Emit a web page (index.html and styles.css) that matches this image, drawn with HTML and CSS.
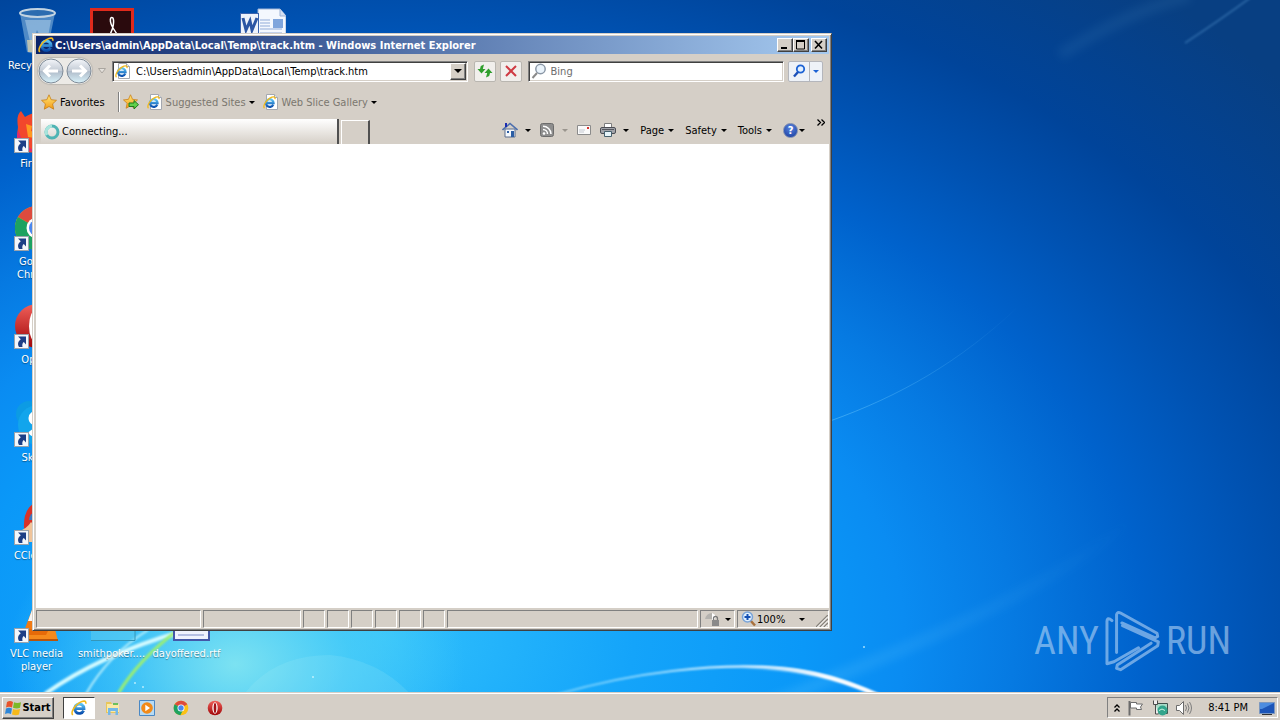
FILE: index.html
```html
<!DOCTYPE html>
<html lang="en">
<head>
  <meta charset="UTF-8">
  <meta name="viewport" content="width=device-width, initial-scale=1.0">
  <title>Desktop</title>
  <link rel="stylesheet" href="styles.css">
</head>
<body>

  <!-- shared icons -->
  <svg class="defs" aria-hidden="true">
    <defs>
      <linearGradient id="gBlue" x1="0" y1="0" x2="0" y2="1">
        <stop offset="0" stop-color="#5cc4f4"/><stop offset="1" stop-color="#0a4fae"/>
      </linearGradient>
      <linearGradient id="gStar" x1="0" y1="0" x2="0" y2="1">
        <stop offset="0" stop-color="#ffe97a"/><stop offset="1" stop-color="#f59a12"/>
      </linearGradient>
      <linearGradient id="gNav" x1="0" y1="0" x2="0" y2="1">
        <stop offset="0" stop-color="#f4f6fa"/><stop offset=".5" stop-color="#c2cad4"/><stop offset=".52" stop-color="#b0bcca"/><stop offset="1" stop-color="#d8f2fa"/>
      </linearGradient>
      <linearGradient id="gRed" x1="0" y1="0" x2="0" y2="1">
        <stop offset="0" stop-color="#f0605a"/><stop offset="1" stop-color="#a00508"/>
      </linearGradient>
    </defs>
    <symbol id="ie" viewBox="0 0 16 16">
      <path d="M12.6 10.6A4.7 4.7 0 1 1 13 8.6H4.5" fill="none" stroke="url(#gBlue)" stroke-width="2.800"/>
      <path d="M1.8 15C-.6 12.600 3.500 5.500 8.500 2.600 12 .6 15.600.2 14.700 3.800" fill="none" stroke="#f2b91c" stroke-width="1.600"/>
    </symbol>
    <symbol id="iepage" viewBox="0 0 16 16">
      <path d="M3.500.5h8l3 3v12h-11z" fill="#fff" stroke="#a4a8b0"/>
      <path d="M11.500.5v3h3" fill="#dfe4ea" stroke="#a4a8b0"/>
      <use href="#ie" x="0" y="2" width="13" height="13"/>
    </symbol>
    <symbol id="star" viewBox="0 0 16 16">
      <path d="M8 .8l2.200 4.900 5.300.6-3.900 3.600 1.100 5.300L8 12.500l-4.700 2.700 1.100-5.300L.5 6.300l5.300-.6z" fill="url(#gStar)" stroke="#c87d14" stroke-width=".8"/>
    </symbol>
    <symbol id="shortcut" viewBox="0 0 15 15">
      <rect x=".5" y=".5" width="14" height="14" fill="#f4f7fb" stroke="#9aa3ad"/>
      <path d="M4 2.500h8v8L9.800 8C8.500 9 8 10.500 8.500 13H5C3 9.500 4.500 7 6.800 5.200z" fill="#1d3f86"/>
    </symbol>
    <symbol id="chrome" viewBox="0 0 48 48">
      <circle cx="24" cy="24" r="22" fill="#fbc116"/>
      <path d="M24 24L4.900 13A22 22 0 0 1 43 13z" fill="#dd4b3e"/>
      <path d="M24 24L4.900 13A22 22 0 0 0 22 46l8-15z" fill="#1da260"/>
      <circle cx="24" cy="24" r="10.500" fill="#fff"/><circle cx="24" cy="24" r="8" fill="#4a87ee"/>
    </symbol>
    <symbol id="opera" viewBox="0 0 48 48">
      <circle cx="24" cy="24" r="22" fill="url(#gRed)"/>
      <ellipse cx="24" cy="24" rx="8" ry="17" fill="#fff"/><ellipse cx="24" cy="24" rx="4" ry="15" fill="#a31115"/>
    </symbol>
  </svg>

  <main class="desktop">
    <svg class="wallpaper" viewBox="0 0 1280 692" preserveAspectRatio="none" aria-hidden="true">
      <defs>
        <linearGradient id="fadeR"><stop offset="0" stop-color="#7cd4ff" stop-opacity=".6"/><stop offset="1" stop-color="#7cd4ff" stop-opacity="0"/></linearGradient>
        <linearGradient id="arc"><stop offset="0" stop-color="#9fe4ff" stop-opacity=".6"/><stop offset=".6" stop-color="#fff"/></linearGradient>
        <linearGradient id="arcEnd"><stop offset="0" stop-color="#fff" stop-opacity="0"/><stop offset=".6" stop-color="#fff"/></linearGradient>
        <filter id="soft"><feGaussianBlur stdDeviation="1"/></filter>
        <filter id="softer" x="-20%" y="-20%" width="140%" height="140%"><feGaussianBlur stdDeviation="5"/></filter>
      </defs>
      <path d="M830 421C900 396 960 362 1020 305" fill="none" stroke="url(#fadeR)" opacity=".7"/>
      <path d="M700 735C850 665 1000 625 1140 515" fill="none" stroke="url(#fadeR)" stroke-width="12" opacity=".4" filter="url(#softer)"/>
      <path d="M1060 55Q1130 10 1190-4" fill="none" stroke="#4c8cc0" stroke-width="12" opacity=".15" filter="url(#softer)"/>
      <path d="M1185 43Q1220 20 1250-2" fill="none" stroke="#5c9cd4" stroke-width="2" opacity=".4" filter="url(#soft)"/>
      <path d="M240 700Q270 655 330 655 380 660 412 696z" fill="#c4f4fa" opacity=".13"/>
      <path d="M555 695C640 670 715 665 765 667S850 682 882 697" fill="none" stroke="url(#arc)" stroke-width="2" filter="url(#soft)"/>
      <path d="M740 667C800 667 840 678 882 697" fill="none" stroke="url(#arcEnd)" stroke-width="4" filter="url(#soft)"/>
      <path d="M45 694Q100 655 180 632" fill="none" stroke="#d4fbff" stroke-width="4" filter="url(#soft)"/>
      <path d="M86 694Q108 655 148 630" fill="none" stroke="#b8f0fc" stroke-width="2" filter="url(#soft)"/>
      <path d="M118 694Q138 660 178 630" fill="none" stroke="#9cf070" stroke-width="3" filter="url(#soft)"/>
      <g fill="#e4fdff" opacity=".7"><circle cx="135" cy="683" r="1"/><circle cx="143" cy="687" r="1"/><circle cx="313" cy="677" r="1"/><circle cx="864" cy="647" r="1"/></g>
    </svg>

    <div class="icons">
      <div class="icon c1 r1">
        <svg viewBox="0 0 48 48"><path d="M7 5l7 39q10 4 20 0l8-39z" fill="#6a9fd0" opacity=".75"/><path d="M12 12l6 26 6-16 9 18 5-28z" fill="#b9d5ec" opacity=".5"/><path d="M14 32h18l2 12H15z" fill="#e9d9a8" opacity=".7"/><ellipse cx="24.500" cy="5" rx="17.500" ry="4" fill="#2c6cb0" stroke="#c3d4e2" stroke-width="2"/></svg>
        <span>Recycle Bin</span>
      </div>
      <div class="icon c2 r1">
        <svg viewBox="0 0 48 48"><rect x="3.500" y="1.500" width="41" height="44" fill="#2a0a0d" stroke="#e02a1c" stroke-width="3"/><path d="M18 34C24 25 27 15 25 10 22 8 21 13 25 20s8 12 13 11" fill="none" stroke="#fff" stroke-width="1.500"/></svg>
        <span>Acrobat Reader DC</span>
      </div>
      <div class="icon c4 r1">
        <svg viewBox="0 0 48 48"><path d="M20 1h22l6 7v39H20z" fill="#f4f8fe" stroke="#9fb4d6"/><path d="M42 1v7h6" fill="#d5e0f2" stroke="#9fb4d6"/><path d="M22 12h10M22 15h10M22 18h10M22 21h22M22 25h22" stroke="#90abd8"/><path d="M35 11h10v9H35z" fill="#7fa5dc"/><rect x="2.500" y="5.500" width="18" height="20" fill="#eef3fb" stroke="#3b64ae"/><path d="M5 10l3 12 4-9 2 9 5-12" fill="none" stroke="#2c56a4" stroke-width="3"/></svg>
        <span>document.docx</span>
      </div>
      <div class="icon c1 r2">
        <svg viewBox="0 0 48 48"><path d="M5 21Q3 9 8 5l4 6q6-4 12-4 20 4 20 20T24 46 4 30z" fill="#f2472c"/><path d="M5 24q4 14 18 22-17-1-19-16z" fill="#e02a70"/><path d="M13 18l6 2-1 5 6 2-2 5-7-1z" fill="#ff9a22"/><circle cx="29" cy="27" r="9" fill="#5a3bc0"/></svg>
        <svg class="arrow"><use href="#shortcut"/></svg>
        <span>Firefox</span>
      </div>
      <div class="icon c1 r3">
        <svg><use href="#chrome"/></svg>
        <svg class="arrow"><use href="#shortcut"/></svg>
        <span>Google Chrome</span>
      </div>
      <div class="icon c1 r4">
        <svg><use href="#opera"/></svg>
        <svg class="arrow"><use href="#shortcut"/></svg>
        <span>Opera</span>
      </div>
      <div class="icon c1 r5">
        <svg viewBox="0 0 48 48"><circle cx="16" cy="14" r="13" fill="#0c9be4"/><circle cx="25" cy="25" r="20" fill="#12a5ec"/><path d="M33 16c-4-5-15-4-15 2 0 8 15 5 15 12 0 6-12 7-16 1" fill="none" stroke="#fff" stroke-width="5"/></svg>
        <svg class="arrow"><use href="#shortcut"/></svg>
        <span>Skype</span>
      </div>
      <div class="icon c1 r6">
        <svg viewBox="0 0 48 48"><path d="M11 30Q10 8 26 3q18 4 18 22T26 46z" fill="#d83228"/><path d="M16 22a8 8 0 0 1 16 0z" fill="#3a79c4"/><path d="M4 34q10-3 14-10l6 6-4 14H8z" fill="#f0c49a"/></svg>
        <svg class="arrow"><use href="#shortcut"/></svg>
        <span>CCleaner</span>
      </div>
      <div class="icon c1 r7">
        <svg viewBox="0 0 48 48"><path d="M24 0l14 38H10z" fill="#f07a14"/><path d="M19 14h10l4 11H15z" fill="#f4f4f4"/><path d="M6 33h36l3 12H3z" fill="#f58a1c"/><path d="M3 43h42v2H3z" fill="#b8540a"/><path d="M12 33h24l-3 6H15z" fill="#e66a08"/></svg>
        <svg class="arrow"><use href="#shortcut"/></svg>
        <span>VLC media player</span>
      </div>
      <div class="icon c2 r7">
        <svg viewBox="0 0 48 48"><path d="M3 2h44v42H3z" fill="#62cdf0" opacity=".5"/><path d="M3 44.500h44V2" fill="none" stroke="#3596b8"/></svg>
        <span>smithpoker....</span>
      </div>
      <div class="icon c3 r7">
        <svg viewBox="0 0 48 48"><path d="M11 2h35v42H11z" fill="#eef2fd" stroke="#4358a8" stroke-width="2"/><path d="M15 34h26M15 39h26" stroke="#7c8cc8"/></svg>
        <span>dayoffered.rtf</span>
      </div>
    </div>

    <div class="watermark">
      <span>ANY</span>
      <svg viewBox="330 58 164 187" aria-hidden="true"><g fill="none" stroke="currentColor" stroke-width="9" stroke-linejoin="round" stroke-linecap="round"><path d="M350 90Q336 78 335 92V220L356 214 430 172M364 186V72Q366 62 376 67L486 128 488 138 480 142 380 97M382 105L490 154 488 166 376 238 364 234 366 224 468 158"/></g></svg>
      <span>RUN</span>
    </div>

    <section class="window">
      <header class="titlebar">
        <svg class="i16"><use href="#ie"/></svg>
        <h1>C:\Users\admin\AppData\Local\Temp\track.htm - Windows Internet Explorer</h1>
        <div class="winbtns">
          <button aria-label="Minimize"><svg viewBox="0 0 12 10"><path d="M2 8h6" stroke="#000" stroke-width="2"/></svg></button>
          <button aria-label="Maximize"><svg viewBox="0 0 12 10"><path d="M1.500 1v8h8V1M1 1h9" fill="none" stroke="#000"/><path d="M1 1h9" stroke="#000" stroke-width="2"/></svg></button>
          <button class="close" aria-label="Close"><svg viewBox="0 0 12 10"><path d="M2 1l7 7.500M9 1L2 8.500" stroke="#000" stroke-width="1.600"/></svg></button>
        </div>
      </header>

      <div class="navbar">
        <div class="history">
          <button aria-label="Back"><svg viewBox="0 0 26 26"><circle cx="13" cy="13" r="12" fill="url(#gNav)" stroke="#7f8b98"/><path d="M7 13h13M12 7.500L6.500 13l5.500 5.500" fill="none" stroke="#fff" stroke-width="3"/></svg></button>
          <button aria-label="Forward"><svg viewBox="0 0 26 26"><circle cx="13" cy="13" r="12" fill="url(#gNav)" stroke="#7f8b98"/><path d="M6 13h13M14 7.500l5.500 5.500-5.500 5.500" fill="none" stroke="#fff" stroke-width="3"/></svg></button>
        </div>
        <button class="recent" aria-label="Recent pages"><svg viewBox="0 0 8 6"><path d="M.5.5h7L4 5z" fill="#e4e1dc" stroke="#aaa6a0"/></svg></button>
        <div class="field address">
          <svg class="i16"><use href="#iepage"/></svg>
          <input type="text" aria-label="Address" value="C:\Users\admin\AppData\Local\Temp\track.htm">
          <button class="drop" aria-label="Show addresses"><i class="tri big"></i></button>
        </div>
        <button class="tool" aria-label="Refresh"><svg class="i16" viewBox="0 0 16 16"><path d="M7 1.500L5.800 6H8.500L4.500 10.500.5 6H3L3.800 3z" fill="#2f9e2c"/><path d="M9 14.500L10.200 10H7.500l4-4.500 4 4.500H13l-.8 3z" fill="#2f9e2c"/></svg></button>
        <button class="tool" aria-label="Stop"><svg class="i16" viewBox="0 0 16 16"><path d="M3 3l10 10M13 3L3 13" stroke="#cf3b43" stroke-width="2"/></svg></button>
        <div class="field search">
          <svg class="i16" viewBox="0 0 16 16"><circle cx="9.500" cy="6" r="4.700" fill="#eaf3fb" stroke="#8a97a6" stroke-width="1.500"/><path d="M6 10l-4.500 5" stroke="#8a8a8a" stroke-width="2"/></svg>
          <input type="text" aria-label="Search" placeholder="Bing">
        </div>
        <div class="searchbtns">
          <button aria-label="Search"><svg viewBox="0 0 14 14"><circle cx="8.500" cy="5" r="3.700" fill="#e2f0ff" stroke="#1c62d4" stroke-width="1.800"/><path d="M6 8l-4 4.500" stroke="#1c50b8" stroke-width="2.400"/></svg></button>
          <button aria-label="Search options"><i class="tri blue"></i></button>
        </div>
      </div>

      <div class="favbar">
        <button class="fav"><svg class="i16"><use href="#star"/></svg>Favorites</button>
        <button aria-label="Add to Favorites Bar"><svg class="i16" viewBox="0 0 16 16"><use href="#star" width="15" height="15"/><path d="M6 9h5V6.500l4.500 4.200-4.500 4.300v-2.500H6z" fill="#5fd04a" stroke="#1f7a1c"/></svg></button>
        <button class="muted"><svg class="i16"><use href="#iepage"/></svg>Suggested Sites<i class="tri"></i></button>
        <button class="muted"><svg class="i16"><use href="#iepage"/></svg>Web Slice Gallery<i class="tri"></i></button>
      </div>

      <div class="tabrow">
        <button class="tab"><svg class="i16" viewBox="0 0 16 16"><circle cx="8" cy="8" r="6" fill="none" stroke="#4fb4b4" stroke-width="3"/><path d="M3 11A6 6 0 0 1 8 2" fill="none" stroke="#a8e4dc" stroke-width="3"/></svg>Connecting...</button>
        <button class="newtab" aria-label="New Tab"></button>
        <div class="commands">
          <button aria-label="Home"><svg class="i16" viewBox="0 0 16 16"><path d="M3 7h10v8H3z" fill="#f5f8fc" stroke="#5a6c8c"/><path d="M.5 8L8 1.500 15.500 8" fill="none" stroke="#4c6fae" stroke-width="1.600"/><path d="M3 1h2v4H3z" fill="#1c2cb0"/><path d="M9 9h3v6H9z" fill="#2c5ea4"/><path d="M5 9h2v2H5z" fill="#2c5ea4"/></svg><i class="tri"></i></button>
          <button aria-label="Feeds"><svg class="i16" viewBox="0 0 16 16"><rect x="1.500" y="1.500" width="13" height="13" rx="2" fill="#8e8e8e" stroke="#6c6c6c"/><circle cx="5" cy="11.500" r="1.300" fill="#fff"/><path d="M4 7.500a4.500 4.500 0 0 1 4.500 4.500M4 4.200A8 8 0 0 1 12 12" fill="none" stroke="#fff" stroke-width="1.500"/></svg><i class="tri off"></i></button>
          <button aria-label="Read mail"><svg class="i16" viewBox="0 0 16 16"><path d="M1.500 3.500h13v9h-13z" fill="#fafafa" stroke="#8b8b8b"/><path d="M3 8h6M3 10h5" stroke="#c4c8d0"/><path d="M11 5h2v2h-2z" fill="#d8322c"/></svg></button>
          <button aria-label="Print"><svg class="i16" viewBox="0 0 16 16"><path d="M4.500 1.500h7v4h-7z" fill="#fff" stroke="#7d7d7d"/><rect x=".5" y="5.500" width="15" height="6" rx="1.500" fill="#a2a4aa" stroke="#4c4e55"/><path d="M2 7.500h12" stroke="#55575e"/><path d="M4.500 9.500h7v5h-7z" fill="#e6f4fa" stroke="#46606e"/></svg><i class="tri"></i></button>
          <button class="menu">Page<i class="tri"></i></button>
          <button class="menu">Safety<i class="tri"></i></button>
          <button class="menu">Tools<i class="tri"></i></button>
          <button class="help" aria-label="Help"><span class="q">?</span><i class="tri"></i></button>
        </div>
        <button class="more" aria-label="More commands"><svg viewBox="0 0 8 7"><path d="M.5.5l3 3-3 3M4.500.5l3 3-3 3" fill="none" stroke="#000" stroke-width="1.300"/></svg></button>
      </div>

      <div class="page"></div>

      <footer class="status">
        <div></div><div></div><div></div><div></div><div></div><div></div><div></div><div></div><div></div>
        <div class="pane">
          <svg class="i16" viewBox="0 0 16 16"><path d="M1 8a7 7 0 0 1 7-6v6z" fill="#b4b2ae"/><path d="M8 2a6 6 0 0 1 4 4L8 12z" fill="#fff"/><path d="M8 9h7v6H8z" fill="#8a8a8a"/><path d="M9.500 9V7.500a2 2 0 0 1 4 0V9" fill="none" stroke="#7a7a7a" stroke-width="1.300"/></svg><i class="tri"></i>
        </div>
        <div class="pane zoom">
          <svg class="i16" viewBox="0 0 16 16"><path d="M9 9l5 5.500" stroke="#a8703c" stroke-width="2.500"/><circle cx="6.500" cy="6" r="5" fill="#e0f0ff" stroke="#7aa4d8" stroke-width="1.500"/><path d="M6.500 3v6M3.500 6h6" stroke="#1450b4" stroke-width="2"/></svg>100%<i class="tri"></i>
          <svg class="grip" viewBox="0 0 12 12"><path d="M0 12L12 0M4 12l8-8M8 12l4-4" stroke="#87837c" stroke-width="1.400"/><path d="M1.500 12L12 1.500M5.500 12L12 5.500M9.500 12l2.500-2.500" stroke="#fff"/></svg>
        </div>
      </footer>
    </section>
  </main>

  <nav class="taskbar">
    <button class="start"><svg viewBox="0 0 16 16"><path d="M2 2q3-2 6 0L7 7.500q-3-1.500-6 0z" fill="#e8532a"/><path d="M9 2.300q3 1.500 7 0L15 7.800q-3 1.500-7 0z" fill="#7cb928"/><path d="M1 8.600q3-1.700 6 0L6 14q-3-1.500-6 0z" fill="#2d86d8"/><path d="M8 9q3 1.600 7 0l-1 5.500q-3 1.500-7 0z" fill="#f6b91a"/></svg>Start</button>
    <button class="task active" aria-label="Internet Explorer"><svg class="i16"><use href="#ie"/></svg></button>
    <button class="task" aria-label="Windows Explorer"><svg class="i16" viewBox="0 0 16 16"><path d="M1 2h5l1 2h7v9H1z" fill="#e8c65c"/><path d="M2 4h12v8H2z" fill="#fae9a6"/><path d="M8 3h5v2H8z" fill="#6cbf5c"/><path d="M3 8h10v7h-2.500v-4h-5v4H3z" fill="#74b8e8"/></svg></button>
    <button class="task" aria-label="Media Player"><svg class="i16" viewBox="0 0 16 16"><path d="M.5.5h15v15H.5z" fill="#b7dbf4" stroke="#4a88c4"/><circle cx="8" cy="8" r="5.800" fill="#f28a18"/><path d="M6.300 4.800L11 8l-4.700 3.200z" fill="#fff"/></svg></button>
    <button class="task" aria-label="Chrome"><svg class="i16"><use href="#chrome"/></svg></button>
    <button class="task" aria-label="Opera"><svg class="i16"><use href="#opera"/></svg></button>
    <div class="tray">
      <svg class="chev" viewBox="0 0 6 8"><path d="M.5 3.500L3 1l2.500 2.500M.5 7.500L3 5l2.500 2.500" fill="none" stroke="#000" stroke-width="1.300"/></svg>
      <svg class="i16" viewBox="0 0 16 16"><path d="M1.500 1v14.500" stroke="#6c6c6c" stroke-width="2"/><path d="M2.500 2.500h6v1.500h6l-2 3 1 2.500h-5V8h-6z" fill="#fff" stroke="#6c6c6c"/></svg>
      <svg class="i16" viewBox="0 0 16 16"><path d="M3.500 3.500h12v10h-12z" fill="#a8dcc8" stroke="#40504c"/><circle cx="10.500" cy="10.500" r="5" fill="#33a58c"/><path d="M7 10.500q3-3 6 0" stroke="#d0f4e4" fill="none"/><path d="M1.500.5v4h4v-4M3.500 4.500V14h3" fill="#eee" stroke="#4c4c4c"/></svg>
      <svg class="i16" viewBox="0 0 16 16"><path d="M.5 5.500h3l4-4v13l-4-4h-3z" fill="#fff" stroke="#6c6c6c"/><path d="M9.500 5q2 3 0 6M11.500 3.500q3 4.500 0 9M13.500 2q4 6 0 12" fill="none" stroke="#7d7d7d"/></svg>
      <time>8:41 PM</time>
      <svg class="i16" viewBox="0 0 16 16"><path d="M.5 2.500h15v11H.5z" fill="#1c55b8" stroke="#7c98c0"/><path d="M1 3h14L3 9H1z" fill="#4c8ce0"/><path d="M3 14.500h10" stroke="#333"/></svg>
    </div>
  </nav>

</body>
</html>
```
FILE: styles.css
```css
* {
  box-sizing: border-box;
}
body {
  margin: 0;
  height: 100vh;
  display: flex;
  flex-direction: column;
  overflow: hidden;
  font-family: "DejaVu Sans Condensed", Tahoma, "Noto Sans", sans-serif;
  font-size: 11px;
  line-height: 13px;
  color: #000;
}
button, input {
  font: inherit;
  color: inherit;
  background: none;
  border: 0;
  padding: 0;
  margin: 0;
}
button {
  display: flex;
  align-items: center;
  justify-content: center;
  flex: none;
  white-space: nowrap;
}
svg {
  flex: none;
}
.defs {
  position: absolute;
  width: 0;
  height: 0;
}
.i16 {
  width: 16px;
  height: 16px;
}
.tri {
  flex: none;
  border: 3px solid transparent;
  border-top-color: #000;
  border-bottom: 0;
}
.tri.big {
  border-width: 4px 4px 0;
}
.tri.off {
  border-top-color: #9a958e;
}
.tri.blue {
  border-top-color: #1c62d4;
}

/* desktop */
.desktop {
  position: relative;
  flex: 1;
  overflow: hidden;
  background:
    radial-gradient(ellipse 230px 170px at 235px 96%, rgba(140, 235, 240, 0.85), rgba(90, 215, 245, 0.55) 50%, transparent),
    radial-gradient(ellipse 1000px 700px at 30% 92%, #30c0fc 0%, #14a4fa 25%, #0a98f8 42%, #0a8cf2 52%, #067ae2 63%, #0062cc 76%, #0052b2 88%, #00449a 100%, #083f82 120%);
}
.wallpaper {
  position: absolute;
  inset: 0;
  width: 100%;
  height: 100%;
}
.icons {
  position: relative;
  display: grid;
  grid-template-columns: repeat(4, 75px);
  grid-template-rows: repeat(7, 98px);
}
.icon {
  position: relative;
  display: flex;
  flex-direction: column;
  align-items: center;
  gap: 3px;
  padding: 8px 4px 0 2px;
  color: #fff;
  text-align: center;
  text-shadow: 0 1px 1px rgba(0, 0, 0, 0.4);
}
.icon svg {
  width: 48px;
  height: 48px;
}
.icon .arrow {
  position: absolute;
  left: 14px;
  top: 40px;
  width: 15px;
  height: 15px;
}
.c1 { grid-column: 1; }
.c2 { grid-column: 2; }
.c3 { grid-column: 3; }
.c4 { grid-column: 4; }
.r1 { grid-row: 1; }
.r2 { grid-row: 2; }
.r3 { grid-row: 3; }
.r4 { grid-row: 4; }
.r5 { grid-row: 5; }
.r6 { grid-row: 6; }
.r7 { grid-row: 7; }
.watermark {
  position: absolute;
  right: 49px;
  bottom: 20px;
  display: flex;
  align-items: center;
  gap: 6px;
  color: rgba(180, 212, 245, 0.6);
  font-family: "Roboto Condensed", "Liberation Sans Narrow", "Liberation Sans", sans-serif;
  font-size: 38px;
  line-height: 62px;
}
.watermark svg {
  width: 55px;
  height: 62px;
}

/* browser window */
.window {
  position: absolute;
  top: 33px;
  left: 32px;
  right: 448px;
  bottom: 61px;
  display: flex;
  flex-direction: column;
  padding: 2px 2px 2px 3px;
  background: #d5cfc7;
  border: 1px solid #d5cfc7;
  border-right-color: #404040;
  border-bottom-color: #404040;
  box-shadow: inset 1px 1px #fff, inset -1px -1px #808080;
}
.titlebar {
  display: flex;
  align-items: center;
  height: 18px;
  padding: 0 2px;
  gap: 1px;
  background: linear-gradient(90deg, #0a246a, #a6caf0);
}
.titlebar h1 {
  flex: 1;
  margin: 0;
  font-size: 11px;
  color: #fff;
  white-space: nowrap;
}
.winbtns {
  display: flex;
}
.winbtns button, .drop {
  width: 16px;
  height: 14px;
  background: #d5cfc7;
  border: 1px solid;
  border-color: #fff #404040 #404040 #fff;
  box-shadow: inset -1px -1px #808080;
}
.winbtns svg {
  width: 12px;
  height: 10px;
}
.winbtns .close {
  margin-left: 2px;
}
.navbar {
  display: flex;
  align-items: center;
  height: 34px;
  padding: 0 6px 0 2px;
}
.history {
  display: flex;
  gap: 2px;
  border-radius: 14px;
  background: #eceae6;
  box-shadow: 0 0 1px 1px #bcb8b2;
}
.history svg {
  width: 26px;
  height: 26px;
}
.recent {
  width: 20px;
}
.recent svg {
  width: 8px;
  height: 6px;
}
.field {
  display: flex;
  align-items: center;
  height: 21px;
  background: #fff;
  border: 1px solid;
  border-color: #808080 #fff #fff #808080;
  box-shadow: inset 1px 1px #404040, inset -1px -1px #d5cfc7;
}
.field input {
  flex: 1;
  min-width: 0;
  outline: 0;
}
.field input::placeholder {
  color: #6d6d6d;
  opacity: 1;
}
.address {
  flex: 7;
  gap: 5px;
  padding: 2px 1px 2px 2px;
}
.drop {
  height: 17px;
}
.search {
  flex: 5;
  margin-left: 6px;
  gap: 4px;
  padding: 2px;
}
.tool {
  width: 22px;
  height: 21px;
  margin-left: 4px;
  background: #f1efec;
  border: 1px solid #b9b6b0;
  border-radius: 2px;
}
.address + .tool {
  margin-left: 6px;
}
.searchbtns {
  display: flex;
  height: 21px;
  margin-left: 4px;
  background: #eef2f8;
  border: 1px solid #b4b6bc;
  border-radius: 2px;
}
.searchbtns button {
  width: 20px;
}
.searchbtns svg {
  width: 14px;
  height: 14px;
}
.searchbtns button + button {
  width: 13px;
  border-left: 1px solid #b4b6bc;
}
.favbar {
  display: flex;
  align-items: center;
  height: 28px;
  padding-left: 5px;
  gap: 8px;
}
.favbar button {
  gap: 3px;
}
.favbar .fav {
  height: 20px;
  padding-right: 13px;
  border-right: 1px solid #808080;
  box-shadow: 1px 0 #fff;
}
.favbar .fav + button {
  margin-left: -4px;
}
.muted {
  color: #7b776f;
}
.tabrow {
  display: flex;
  height: 28px;
  padding: 3px 4px 0 5px;
}
.tab {
  width: 298px;
  justify-content: flex-start;
  gap: 2px;
  padding-left: 3px;
  background: linear-gradient(#fff, #d5cfc7);
  border-right: 2px solid #505050;
}
.newtab {
  width: 29px;
  margin: 1px 0 0 2px;
  border: solid;
  border-width: 1px 2px 0 1px;
  border-color: #fff #505050 #fff #fff;
}
.commands {
  display: flex;
  align-items: center;
  gap: 8px;
  height: 22px;
  margin-left: auto;
}
.commands button {
  gap: 7px;
}
.commands .menu {
  gap: 4px;
  padding-left: 3px;
}
.commands .help {
  gap: 1px;
  padding-left: 3px;
}
.q {
  width: 15px;
  height: 15px;
  border-radius: 50%;
  border: 1px solid #7c8cb0;
  background: radial-gradient(circle at 50% 30%, #5a86e0, #14389c);
  color: #fff;
  font-weight: bold;
}
.more {
  align-self: flex-start;
  margin-left: 12px;
}
.more svg {
  width: 8px;
  height: 7px;
}
.page {
  flex: 1;
  background: #fff;
}
.status {
  display: grid;
  grid-template-columns: 165px 98px repeat(6, 22px) 1fr 35px 92px;
  gap: 2px;
  height: 20px;
  padding-top: 2px;
}
.status div {
  border: 1px solid;
  border-color: #808080 #fff #fff #808080;
}
.status .pane {
  position: relative;
  display: flex;
  align-items: center;
  gap: 5px;
  padding-left: 3px;
}
.status .zoom {
  gap: 0;
}
.zoom .tri {
  margin-left: 14px;
}
.grip {
  position: absolute;
  right: 0;
  bottom: 0;
  width: 12px;
  height: 12px;
}

/* taskbar */
.taskbar {
  display: flex;
  align-items: center;
  height: 28px;
  padding: 2px 2px 0;
  background: #d5cfc7;
  border-top: 1px solid #d5cfc7;
  box-shadow: inset 0 1px #fff;
}
.start {
  width: 52px;
  height: 22px;
  gap: 1px;
  margin-right: 9px;
  font-weight: bold;
  border: 1px solid;
  border-color: #fff #404040 #404040 #fff;
  box-shadow: inset -1px -1px #808080;
}
.start svg {
  width: 16px;
  height: 16px;
}
.task {
  width: 32px;
  height: 22px;
  margin-right: 2px;
}
.task.active {
  background: #fff;
  border: 1px solid;
  border-color: #404040 #fff #fff #404040;
}
.tray {
  display: flex;
  align-items: center;
  gap: 8px;
  height: 21px;
  margin-left: auto;
  padding: 0 2px 0 6px;
  border: 1px solid;
  border-color: #808080 #fff #fff #808080;
}
.tray time {
  margin: 0 3px 0 8px;
}
.chev {
  width: 6px;
  height: 8px;
}
```
